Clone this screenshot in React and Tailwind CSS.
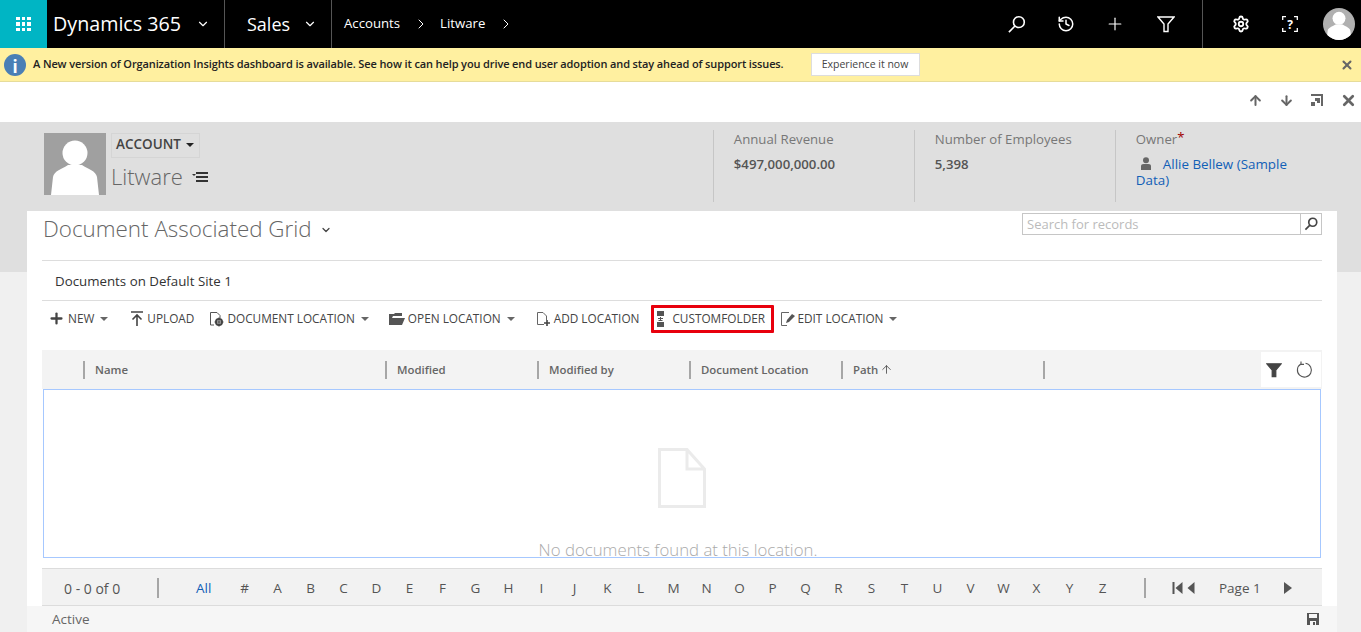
import {
  ArrowDown,
  ArrowUp,
  ChevronDown,
  ChevronRight,
  History,
  Plus,
  Settings,
  X,
} from "lucide-react";

const columns = [
  { title: "Name", width: "w-[302px]" },
  { title: "Modified", width: "w-[152px]" },
  { title: "Modified by", width: "w-[152px]" },
  { title: "Document Location", width: "w-[152px]" },
  { title: "Path", width: "w-[202px]", sorted: true },
];

const letters = "ABCDEFGHIJKLMNOPQRSTUVWXYZ".split("");

const Caret = ({ className = "" }) => (
  <span className={`ml-[6px] h-0 w-0 border-x-[4px] border-t-[4px] border-x-transparent border-t-[#666] ${className}`} />
);

const Person = ({ className, head, body }) => (
  <svg viewBox="0 0 62 62" className={className}>
    <circle cx="31" cy="20" r="12.5" fill={head} />
    <path d="M7 62 L9 44 C10 38 18 36 24 32 L38 32 C44 36 52 38 53 44 L55 62 Z" fill={body} />
  </svg>
);

const Funnel = ({ className, solid }) => (
  <svg viewBox="0 0 18 18" className={className}>
    <path
      d="M1 2 H17 L11 9 V16.5 H7 V9 Z"
      fill={solid ? "#444" : "none"}
      stroke={solid ? "#444" : "#fff"}
      strokeWidth="1.4"
    />
  </svg>
);

const Magnifier = ({ className, color = "#fff", width = 1.7 }) => (
  <svg viewBox="0 0 20 20" className={className} fill="none" stroke={color} strokeWidth={width}>
    <circle cx="12.5" cy="7.5" r="5.7" />
    <path d="M8.4 11.6 L2 18" />
  </svg>
);

const TopBar = () => (
  <div className="flex h-12 items-stretch bg-black text-white">
    <div className="grid w-[47px] place-items-center bg-[#00b5c4]">
      <div className="grid grid-cols-3 gap-[2px]">
        {[...Array(9)].map((_, i) => (
          <span key={i} className="h-[3.5px] w-[3.5px] bg-white" />
        ))}
      </div>
    </div>
    <div className="flex w-[178px] items-center border-r border-[#555] pl-[6px]">
      <span className="text-[19.7px]">Dynamics 365</span>
      <ChevronDown className="ml-[15px] h-[14px] w-[14px]" />
    </div>
    <div className="flex w-[107px] items-center border-r border-[#555] pl-[22px]">
      <span className="text-[18px]">Sales</span>
      <ChevronDown className="ml-[13px] h-[14px] w-[14px]" />
    </div>
    <div className="flex items-center pl-[12px] text-[13.2px]">
      <span>Accounts</span>
      <ChevronRight className="ml-[13px] mr-[11px] h-[16px] w-[16px]" strokeWidth={1.5} />
      <span>Litware</span>
      <ChevronRight className="ml-[13px] h-[16px] w-[16px]" strokeWidth={1.5} />
    </div>
    <div className="ml-auto flex items-center">
      <Magnifier className="mr-[31px] h-[19px] w-[19px]" />
      <History className="mr-[30px] h-[18px] w-[18px]" strokeWidth={2} />
      <Plus className="mr-[32px] h-[20px] w-[20px]" strokeWidth={1.4} />
      <Funnel className="mr-[27px] h-[18px] w-[18px]" />
      <div className="flex h-12 items-center border-l border-[#555] pl-[29px]">
        <Settings className="mr-[32px] h-[18px] w-[18px]" strokeWidth={2.4} />
        <div className="relative mr-[25px] grid h-[16px] w-[16px] place-items-center text-[12px] font-bold">
          <svg viewBox="0 0 16 16" className="absolute inset-0 h-[16px] w-[16px]" fill="none" stroke="#fff" strokeWidth="1.3">
            <path d="M4 .7 H.7 V4 M12 .7 H15.3 V4 M4 15.3 H.7 V12 M12 15.3 H15.3 V12" />
          </svg>
          ?
        </div>
        <div className="mr-[6px] h-8 w-8 overflow-hidden rounded-full bg-[#b0b0b0]">
          <Person className="h-8 w-8" head="#fff" body="#fff" />
        </div>
      </div>
    </div>
  </div>
);

const Notice = () => (
  <div className="flex h-[34px] items-center border-b border-[#e6dc9a] bg-[#fff0a0] pl-[4px] pr-[7px]">
    <span className="grid h-[22px] w-[22px] place-items-center rounded-full bg-[#4a7fb5] text-[17px] font-bold text-white">
      i
    </span>
    <span className="ml-[7px] text-[11px] font-semibold tracking-[-0.12px] text-[#222]">
      A New version of Organization Insights dashboard is available. See how it can help you drive end user adoption and stay ahead of support issues.
    </span>
    <span className="ml-[27px] flex h-[23px] w-[109px] items-center justify-center border border-[#ddd] bg-white text-[10.5px] text-[#444]">
      Experience it now
    </span>
    <X className="ml-auto h-[14px] w-[14px] text-[#666]" strokeWidth={3.5} />
  </div>
);

const RecordNav = () => (
  <div className="flex h-[40px] items-center justify-end gap-[16px] bg-white pb-[4px] pr-[4px] text-[#666]">
    <ArrowUp className="h-[15px] w-[15px]" strokeWidth={3.2} />
    <ArrowDown className="h-[15px] w-[15px]" strokeWidth={3.2} />
    <svg viewBox="0 0 14 14" className="h-[14px] w-[14px]">
      <path d="M1 1 H13 V13 H11 V3 H1 Z M5 5 H10 V10 H7 V8 H5 Z M1 9 H5 V13 H1 Z" fill="#666" />
    </svg>
    <X className="h-[17px] w-[17px]" strokeWidth={3.8} />
  </div>
);

const Stat = ({ label, value, width }) => (
  <div className={`h-[72px] border-l border-[#c6c6c6] pl-[20px] ${width}`}>
    <div className="text-[13.2px] leading-[18px] text-[#777]">{label}</div>
    <div className="mt-[7px] text-[13.2px] font-semibold leading-[18px] text-[#555]">{value}</div>
  </div>
);

const RecordHeader = () => (
  <div className="h-[150px] bg-[#dfdfdf] pl-[44px] pt-[11px]">
    <div className="flex">
      <div className="h-[62px] w-[62px] bg-[#a0a0a0]">
        <Person className="h-[62px] w-[62px]" head="#fff" body="#fff" />
      </div>
      <div className="ml-[5px]">
        <div className="flex h-[25px] w-[89px] items-center border border-[#d5d5d5] pb-[2px] pl-[4px] text-[13.5px] font-semibold text-[#444]">
          ACCOUNT
          <span className="ml-[5px] h-0 w-0 border-x-[4px] border-t-[4px] border-x-transparent border-t-[#222]" />
        </div>
        <div className="mt-[2px] flex items-center text-[22px] font-light text-[#666]">
          Litware
          <span className="mb-[3px] ml-[9px] h-0 w-0 border-x-[2px] border-t-[2px] border-x-transparent border-t-[#333]" />
          <span className="flex flex-col gap-[2px]">
            <span className="h-[2px] w-[12px] bg-[#333]" />
            <span className="h-[2px] w-[12px] bg-[#333]" />
            <span className="h-[2px] w-[12px] bg-[#333]" />
          </span>
        </div>
      </div>
      <div className="-mt-[3px] ml-[505px] flex">
        <Stat label="Annual Revenue" value="$497,000,000.00" width="w-[201px]" />
        <Stat label="Number of Employees" value="5,398" width="w-[201px]" />
        <div className="h-[72px] w-[190px] border-l border-[#c6c6c6] pl-[20px]">
          <div className="text-[13.2px] leading-[18px] text-[#777]">
            Owner<span className="relative -top-[2px] text-[#a00000]">*</span>
          </div>
          <div className="mt-[8px] text-[13.4px] leading-[16px] text-[#1160b7]">
            <svg viewBox="0 0 12 13" className="ml-[4px] mr-[11px] inline-block h-[13px] w-[12px] align-[-1px]">
              <circle cx="6" cy="3.2" r="3" fill="#666" />
              <path d="M1 13 V9 C1 7 3 7 6 7 C9 7 11 7 11 9 V13 Z" fill="#666" />
            </svg>
            Allie Bellew (Sample Data)
          </div>
        </div>
      </div>
    </div>
  </div>
);

const Command = ({ icon, label, caret, className = "" }) => (
  <div className={`flex items-center text-[11.8px] text-[#444] ${className}`}>
    {icon}
    <span>{label}</span>
    {caret && <Caret />}
  </div>
);

const CommandBar = () => (
  <div className="flex h-[40px] items-center border-t border-[#ddd] pb-[4px] pl-[6px]">
    <Command
      label="NEW"
      caret
      icon={<Plus className="mr-[3px] h-[17px] w-[17px] text-[#444]" strokeWidth={3.2} />}
    />
    <Command
      className="ml-[22px]"
      label="UPLOAD"
      icon={
        <svg viewBox="0 0 14 16" className="mr-[3px] h-[16px] w-[14px]">
          <path d="M1 1 H13 M7 15 V4 M2.5 8.5 L7 4 L11.5 8.5" stroke="#444" strokeWidth="1.6" fill="none" />
        </svg>
      }
    />
    <Command
      className="ml-[15px]"
      label="DOCUMENT LOCATION"
      caret
      icon={
        <svg viewBox="0 0 15 16" className="mr-[3px] h-[16px] w-[15px]">
          <path d="M5 14 H1.5 V1.5 H8 L11 4.5 V7" stroke="#555" strokeWidth="1" fill="none" />
          <circle cx="10" cy="11" r="3" fill="none" stroke="#444" strokeWidth="2" />
          <path d="M10 6.5 V15.5 M5.5 11 H14.5" stroke="#444" strokeWidth="1.2" />
        </svg>
      }
    />
    <Command
      className="ml-[20px]"
      label="OPEN LOCATION"
      caret
      icon={
        <svg viewBox="0 0 16 12" className="mr-[3px] h-[12px] w-[16px]">
          <path d="M0 12 V1 H5 L6 0 H13 V3 H4 L3 5 H16 L13 12 Z" fill="#555" />
        </svg>
      }
    />
    <Command
      className="ml-[21px]"
      label="ADD LOCATION"
      icon={
        <svg viewBox="0 0 15 15" className="mr-[3px] h-[15px] w-[15px]">
          <path d="M8 13.5 H1.5 V1.5 H7 L10.5 5 V9" stroke="#666" strokeWidth="1" fill="none" />
          <path d="M11 9 V15 M8 12 H14" stroke="#444" strokeWidth="1.6" />
        </svg>
      }
    />
    <div className="ml-[12px] flex h-[28px] w-[123px] items-center rounded-[1px] border-[3px] border-[#e8000d] pl-[3px] text-[11.8px] text-[#444]">
      <svg viewBox="0 0 8 16" className="mr-[7px] h-[16px] w-[8px]">
        <path d="M0 0 H7 V5 H0 Z M0 11 H7 V16 H0 Z M1 7 H6 V8 H1 Z M3 6 H4 V10 H3 Z M1.5 9 H5.5 V10 H1.5 Z" fill="#555" />
      </svg>
      CUSTOMFOLDER
    </div>
    <Command
      className="ml-[7px]"
      label="EDIT LOCATION"
      caret
      icon={
        <svg viewBox="0 0 15 14" className="mr-[1px] h-[14px] w-[15px]">
          <path d="M6 13.5 H0.5 V0.5 H8" stroke="#666" strokeWidth="1" fill="none" />
          <path d="M5 11 L6 8 L11 2 L14 4 L8 10 Z" fill="#555" />
        </svg>
      }
    />
  </div>
);

const GridHeader = () => (
  <div className="mt-[10px] flex h-[39px] items-center bg-[#f3f3f3] pl-[41px] pr-[1px] text-[11.4px] font-semibold text-[#666]">
    {columns.map((col) => (
      <div key={col.title} className={`flex h-[18px] items-center border-l-2 border-[#a6a6a6] pl-[10px] ${col.width}`}>
        {col.title}
        {col.sorted && <ArrowUp className="ml-[2px] h-[13px] w-[13px] text-[#444]" strokeWidth={1.5} />}
      </div>
    ))}
    <span className="h-[18px] border-l-2 border-[#a6a6a6]" />
    <div className="ml-auto flex h-[35px] w-[60px] items-center bg-white pl-[5px]">
      <Funnel className="h-[16px] w-[16px]" solid />
      <svg viewBox="0 0 18 18" className="ml-[13px] h-[18px] w-[18px]" fill="none" stroke="#555" strokeWidth="1.1">
        <path d="M6 3 A7 7 0 1 0 10.5 2.2" />
        <path d="M6 .5 V3.4 H9" />
      </svg>
    </div>
  </div>
);

const EmptyGrid = () => (
  <div className="mx-[1px] flex h-[169px] flex-col items-center overflow-hidden border border-[#a6c8ff] bg-white">
    <svg viewBox="0 0 48 60" className="mt-[58px] h-[60px] w-[48px] flex-none">
      <path d="M1.5 1.5 H29 L46.5 21 V58.5 H1.5 Z M29 1.5 V21 H46.5" fill="none" stroke="#ebebeb" strokeWidth="3" />
    </svg>
    <span className="mr-[8px] mt-[30px] flex-none text-[16.8px] font-light leading-[24px] text-[#aaa]">
      No documents found at this location.
    </span>
  </div>
);

const Pager = () => (
  <div className="mt-[10px] flex h-[38px] items-center border-y border-[#dcdcdc] bg-[#f2f2f2] pt-[2px] text-[13.5px] text-[#555]">
    <span className="w-[115px] pl-[22px] text-[14px] font-medium">0 - 0 of 0</span>
    <span className="h-[20px] border-l-2 border-[#a6a6a6]" />
    <span className="w-[70px] pl-[37px] font-medium text-[#1160b7]">All</span>
    <span className="-ml-[1px] w-[33px] flex-none text-center">#</span>
    {letters.map((l) => (
      <span key={l} className="w-[33px] flex-none text-center">
        {l}
      </span>
    ))}
    <span className="ml-[25px] h-[20px] border-l-2 border-[#a6a6a6]" />
    <svg viewBox="0 0 24 12" className="ml-[25px] h-[12px] w-[25px]">
      <path d="M1 0 H3 V12 H1 Z M11 0 V12 L4 6 Z M23 0 V12 L16 6 Z" fill="#555" />
    </svg>
    <span className="ml-[23px] font-medium">Page 1</span>
    <svg viewBox="0 0 8 12" className="ml-[23px] h-[12px] w-[8px]">
      <path d="M0 0 L8 6 L0 12 Z" fill="#555" />
    </svg>
  </div>
);

const StatusBar = () => (
  <div className="flex h-[26px] items-center bg-[#f6f6f6] pl-[25px] pr-[18px] text-[13.5px] text-[#666]">
    Active
    <svg viewBox="0 0 12 12" className="ml-auto h-[12px] w-[12px]">
      <path d="M0 0 H12 V12 H0 Z" fill="#555" />
      <path d="M2 1 H10 V5 H2 Z M3 8 H9 V12 H3 Z" fill="#f6f6f6" />
      <path d="M6 9 H8 V12 H6 Z" fill="#555" />
    </svg>
  </div>
);

export default function App() {
  return (
    <div className="h-[632px] overflow-hidden bg-[#f0f0f0] font-['Open_Sans','Noto_Sans',sans-serif]">
      <TopBar />
      <Notice />
      <RecordNav />
      <RecordHeader />
      <div className="relative z-10 ml-[27px] -mt-[61px] w-[1310px] bg-white">
        <div className="px-[15px]">
          <div className="flex h-[50px] items-start justify-between border-b border-[#ddd]">
            <div className="ml-[1px] mt-[1px] flex items-center text-[22.4px] font-light text-[#666]">
              Document Associated Grid
              <ChevronDown className="ml-[8px] mt-[3px] h-[12px] w-[12px] text-[#444]" strokeWidth={2.5} />
            </div>
            <div className="mt-[2px] flex h-[22px] w-[300px] border border-[#c6c6c6]">
              <span className="flex-1 pl-[4px] text-[13px] leading-[20px] text-[#bbb]">Search for records</span>
              <span className="grid w-[21px] place-items-center border-l border-[#c6c6c6]">
                <Magnifier className="h-[14px] w-[14px]" color="#444" width={2.4} />
              </span>
            </div>
          </div>
          <div className="flex h-[39px] items-center pl-[13px] pt-[2px] text-[13.3px] text-[#333]">
            Documents on Default Site 1
          </div>
          <CommandBar />
          <GridHeader />
          <EmptyGrid />
          <Pager />
        </div>
        <StatusBar />
      </div>
    </div>
  );
}
